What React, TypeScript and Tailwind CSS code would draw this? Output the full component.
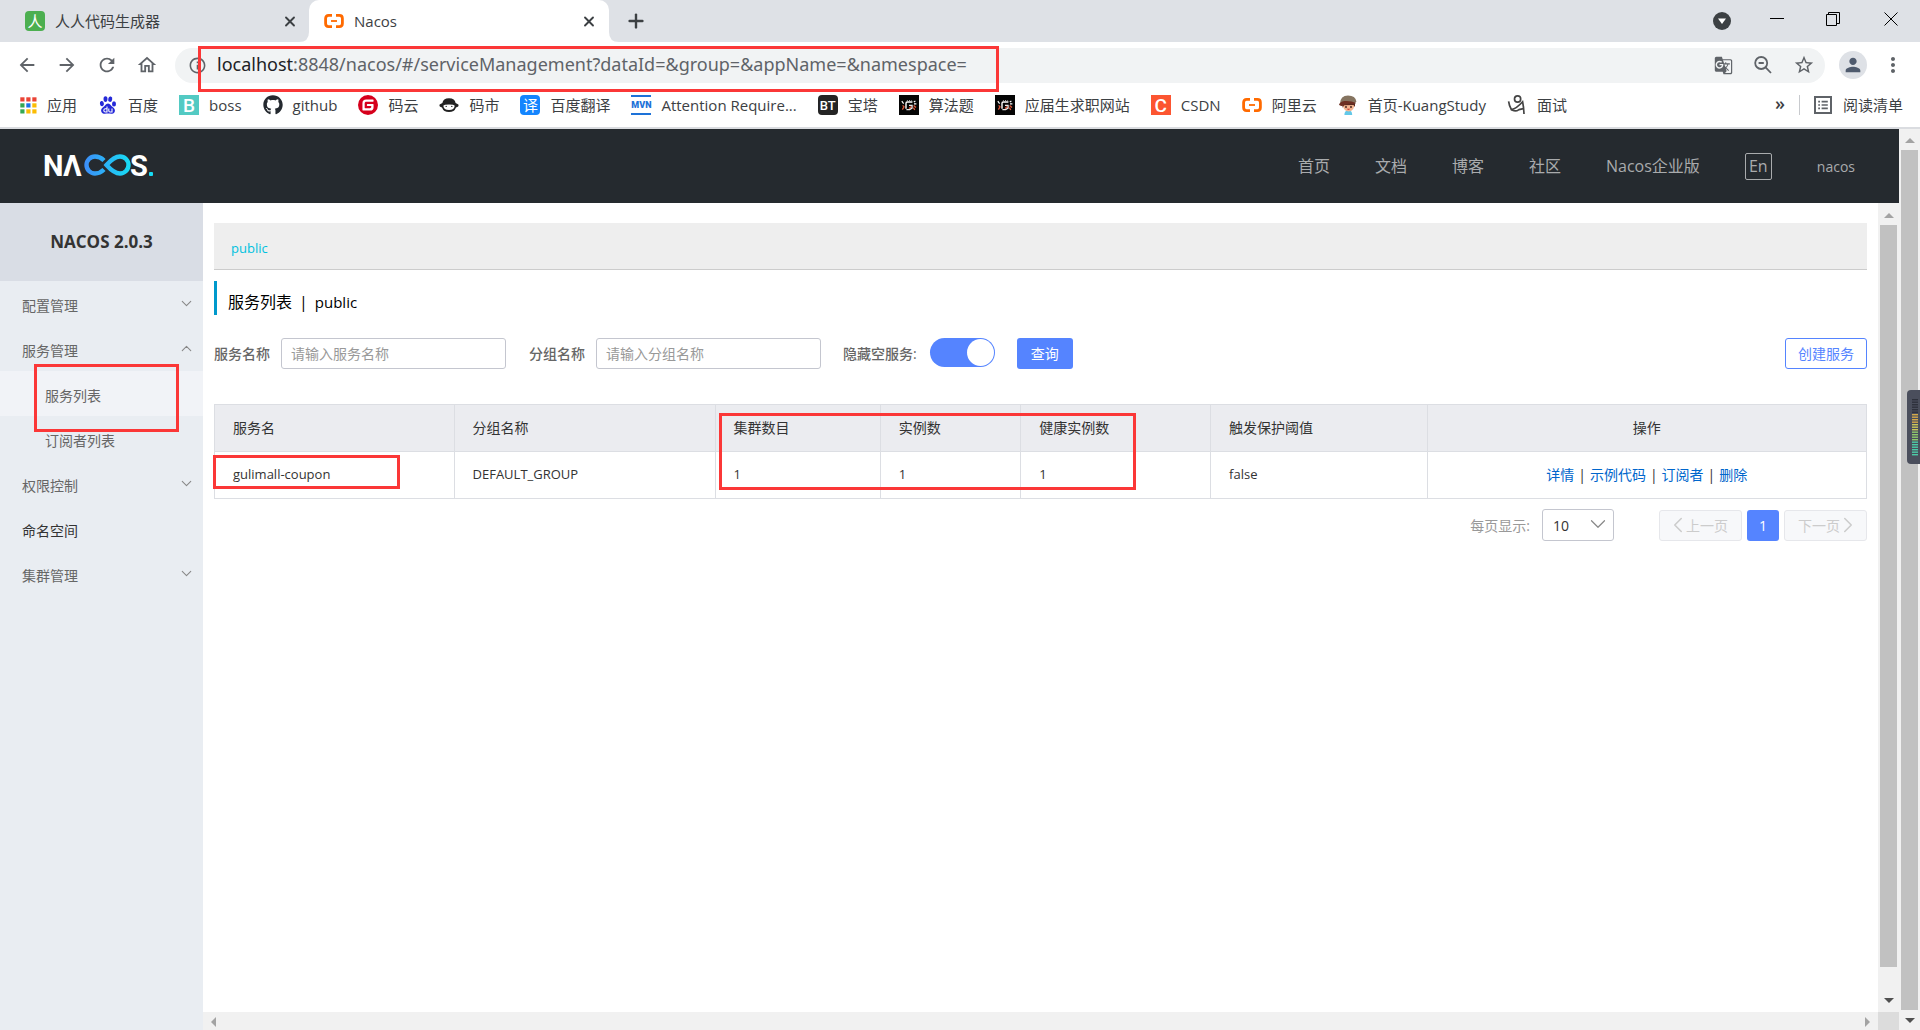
import type { ReactNode } from 'react';
import { MdArrowBack, MdArrowForward, MdRefresh, MdOutlineHome, MdStarBorder, MdPerson, MdMoreVert, MdGTranslate, MdOutlineInfo } from 'react-icons/md';
import { SiGitee } from 'react-icons/si';
import { FaGithub } from 'react-icons/fa';
import { ChevronDown, ChevronLeft, ChevronRight, ChevronUp, X, Plus } from 'lucide-react';

function AliIcon() {
  return (
    <svg viewBox="0 0 20 20" className="size-5 shrink-0" fill="none" stroke="#ff6a00" strokeWidth="2.8">
      <path d="M8 4.4H4.6Q1.6 4.4 1.6 7.4V12.6Q1.6 15.6 4.6 15.6H8" />
      <path d="M12 4.4H15.4Q18.4 4.4 18.4 7.4V12.6Q18.4 15.6 15.4 15.6H12" />
      <path d="M7 10H13" strokeWidth="1.8" />
    </svg>
  );
}

function AppsIcon() {
  const colors = ['#ea4335', '#ea4335', '#ea4335', '#34a853', '#1a73e8', '#fbbc04', '#34a853', '#fbbc04', '#fbbc04'];
  return (
    <svg viewBox="0 0 17 17" className="size-[17px] shrink-0">
      {colors.map((c, i) => (
        <rect key={i} x={(i % 3) * 6 + 0.3} y={Math.floor(i / 3) * 6 + 0.3} width="4.2" height="4.2" fill={c} />
      ))}
    </svg>
  );
}

function BaiduIcon() {
  return (
    <svg viewBox="0 0 20 20" className="size-5 shrink-0" fill="#2529d8">
      <ellipse cx="3.9" cy="8.6" rx="2" ry="2.7" transform="rotate(-12 3.9 8.6)" />
      <ellipse cx="7.5" cy="4.1" rx="2" ry="2.8" />
      <ellipse cx="12.2" cy="4.2" rx="2" ry="2.7" transform="rotate(14 12.2 4.2)" />
      <ellipse cx="16" cy="8.9" rx="2" ry="2.6" />
      <path d="M10 8.4C7.6 8.4 7 10.8 5 12.3 2.9 13.9 2.7 15.8 3.6 17.3 5 19.5 7.6 18.6 10 18.6 12.4 18.6 15.2 19.5 16.5 17.3 17.4 15.6 17 13.7 15 12.3 13 10.8 12.4 8.4 10 8.4Z" />
      <g fill="none" stroke="#fff" strokeWidth="1.1">
        <path d="M9 11.6V17H7.4Q5.8 17 5.8 15.4 5.8 13.8 7.4 13.8H9" />
        <path d="M10.8 13.4V15.8Q10.8 17 12 17H14V13.4" />
      </g>
    </svg>
  );
}

function CodingIcon() {
  return (
    <svg viewBox="0 0 20 20" className="size-5 shrink-0">
      <path d="M3.4 8Q4 3.2 10 3.2 16 3.2 16.6 8L19.4 9.4Q20 11 18.8 11.8L17 12.4Q15.4 17 10 17 4.6 17 3 12.4L1.2 11.8Q0 11 .6 9.4Z" fill="#222" />
      <path d="M4.300 10.8Q5 9.4 10 9.4 15 9.4 15.700 10.8 15.400 15 10 15 4.600 15 4.300 10.800Z" fill="#fff" />
      <circle cx="7.200" cy="11.4" r=".7" fill="#222" />
      <circle cx="12.800" cy="11.4" r=".7" fill="#222" />
    </svg>
  );
}

function AlgoIcon() {
  return (
    <svg viewBox="0 0 20 20" className="size-5 shrink-0" fill="none" strokeWidth="1.4">
      <rect width="20" height="20" fill="#050505" />
      <path d="M7 13.8V8.2Q7 7 8.2 7H13.4" stroke="#fff" />
      <path d="M10 10.4H13V13.2L10.6 14.6H7.4" stroke="#e8e8e8" />
      <path d="M8.4 6.6V5.2M10.6 6.6V5M12.6 6.6V5.4" stroke="#bbb" strokeWidth="1" />
      <path d="M3.600 10.4 5 11.800 3.400 14.600M10 13.600 12.400 11.600M14.600 10.400 17 12.600M14.4 12.600 15.8 15" stroke="#e0583a" strokeWidth="1.3" />
      <path d="M2.8 6.2 4.6 8.6M14.8 7 16.400 6M15 8.800H17.400" stroke="#fff" strokeWidth="1.2" />
    </svg>
  );
}

function BoyIcon() {
  return (
    <svg viewBox="0 0 20 20" className="size-5 shrink-0">
      <path d="M6.400 20Q6.400 15.6 10.4 15.6 14.200 15.6 14.200 20Z" fill="#63c8e8" />
      <path d="M4.6 8H16.4Q17 15.8 10.6 16.4 4.4 15.8 4.6 8Z" fill="#f3b48f" />
      <path d="M4.2 7H17V12L15.4 10 6 10.2 4.6 12.8Z" fill="#5a2a20" />
      <path d="M2 8.4Q2.4 .6 10 .4 17.6.4 18.4 6.8L16.4 8.6Q10 5.8 4.4 9.4Z" fill="#857460" />
      <path d="M1 9.8Q1.6 7 6.4 6 13 5.400 18 8 17 9.600 13 8.800 9 8.200 5 10.8 2 11.4 1 9.8Z" fill="#6e2f22" />
      <circle cx="8" cy="12" r=".9" fill="#3b1d18" />
      <circle cx="13" cy="12" r=".9" fill="#3b1d18" />
      <path d="M8.6 13.8H12.4Q10.4 16 8.6 13.8Z" fill="#c73b34" />
    </svg>
  );
}

function FigureIcon() {
  return (
    <svg viewBox="0 0 20 20" className="size-5 shrink-0" fill="none" stroke="#444" strokeWidth="1.7">
      <circle cx="10.6" cy="4" r="3.1" />
      <path d="M1.600 6.400Q2.200 11 4.400 14.600 9.400 13.800 15.600 6.800 16.800 12.400 17 19" />
      <path d="M4 14.4Q8 17.400 12 14.600L16.400 13.600" />
    </svg>
  );
}

function TextIcon({ className, children }: { className: string; children: ReactNode }) {
  return (
    <span aria-hidden="true" className={`flex size-5 shrink-0 items-center justify-center leading-none ${className}`}>
      {children}
    </span>
  );
}

function Bookmark({ icon, label }: { icon: ReactNode; label: string }) {
  return (
    <a href="#" className="flex shrink-0 items-center gap-[10px]">
      {icon}
      <span>{label}</span>
    </a>
  );
}

function RedFrame({ className }: { className: string }) {
  return <div className={`pointer-events-none absolute z-10 border-3 border-[#fb3737] ${className}`} />;
}

function Arrow({ dir, color }: { dir: 'up' | 'down' | 'left' | 'right'; color: string }) {
  const d = { up: 'M0 5 5 0 10 5Z', down: 'M0 0H10L5 5Z', left: 'M5 0V10L0 5Z', right: 'M0 0V10L5 5Z' }[dir];
  const vertical = dir === 'up' || dir === 'down';
  return (
    <svg viewBox={vertical ? '0 0 10 5' : '0 0 5 10'} className={vertical ? 'h-[5px] w-[10px] shrink-0' : 'h-[10px] w-[5px] shrink-0'} fill={color}>
      <path d={d} />
    </svg>
  );
}

function BrowserChrome() {
  return (
    <div className="shrink-0 border-b-2 border-[#dadce0] bg-white text-[15px] text-[#3c4043]">
      <div className="flex h-[42px] items-stretch bg-[#dee1e6]">
        <div className="flex w-[309px] items-center pr-[11px] pl-[25px]">
          <TextIcon className="rounded-sm bg-[#4caf50] text-[15px] text-white">人</TextIcon>
          <span className="ml-[10px] flex-1">人人代码生成器</span>
          <button aria-label="关闭标签页" className="flex size-4 items-center justify-center"><X size={17} strokeWidth={2.8} /></button>
        </div>
        <div className="relative flex w-[300px] items-center rounded-t-[10px] bg-white pr-3 pl-[15px]">
          <svg viewBox="0 0 10 10" className="absolute bottom-0 -left-[10px] size-[10px]" fill="#fff"><path d="M10 0V10H0Q10 10 10 0Z" /></svg>
          <svg viewBox="0 0 10 10" className="absolute -right-[10px] bottom-0 size-[10px]" fill="#fff"><path d="M0 0V10H10Q0 10 0 0Z" /></svg>
          <AliIcon />
          <span className="ml-[10px] flex-1">Nacos</span>
          <button aria-label="关闭标签页" className="flex size-4 items-center justify-center"><X size={17} strokeWidth={2.8} /></button>
        </div>
        <button aria-label="新标签页" className="ml-4 flex items-center"><Plus size={22} strokeWidth={2.6} /></button>
        <div className="ml-auto flex items-center text-black">
          <button aria-label="搜索标签页" className="mr-[39px]">
            <svg viewBox="0 0 18 18" className="size-[18px]"><circle cx="9" cy="9" r="9" fill="#3c4043" /><path d="M5 6.5H13L9 12Z" fill="#fff" /></svg>
          </button>
          <button aria-label="最小化" className="mr-[42px] mb-1">
            <svg viewBox="0 0 14 14" className="size-[14px]" stroke="currentColor"><path d="M0 6.5H14" /></svg>
          </button>
          <button aria-label="还原" className="mr-[44px] mb-1">
            <svg viewBox="0 0 14 14" className="size-[14px]" fill="none" stroke="currentColor"><path d="M.5 2.5H10.5V13.5H.5ZM2.5 2.5V.5H13.5V11.5H10.5" /></svg>
          </button>
          <button aria-label="关闭" className="mr-[22px] mb-1">
            <svg viewBox="0 0 14 14" className="size-[14px]" stroke="currentColor"><path d="M.5.5 13.5 13.5M13.5.5.5 13.5" /></svg>
          </button>
        </div>
      </div>

      <div className="flex h-[44px] items-center pt-[2px] pl-4 text-[#5f6368]">
        <div className="flex items-center gap-[18px]">
          <button aria-label="后退"><MdArrowBack size={22} /></button>
          <button aria-label="前进"><MdArrowForward size={22} /></button>
          <button aria-label="刷新"><MdRefresh size={22} /></button>
          <button aria-label="主页"><MdOutlineHome size={22} /></button>
        </div>
        <div className="relative ml-[17px] flex h-[35px] flex-1 items-center rounded-full bg-[#f1f3f4] pr-[10px] pl-[13px]">
          <MdOutlineInfo size={19} />
          <div className="ml-[10px] flex-1 pb-[2px] font-['Noto_Sans'] text-[18px]">
            <span className="text-[#202124]">localhost</span>:8848/nacos/#/serviceManagement?dataId=&amp;group=&amp;appName=&amp;namespace=
          </div>
          <div className="flex items-center gap-5">
            <button aria-label="翻译此页"><MdGTranslate size={19} /></button>
            <button aria-label="缩放">
              <svg viewBox="0 0 20 20" className="size-5" fill="none" stroke="currentColor" strokeWidth="1.8">
                <circle cx="8.2" cy="8" r="6" /><path d="M5.6 8H10.8M12.6 12.4 18 18" />
              </svg>
            </button>
            <button aria-label="为此标签页添加书签"><MdStarBorder size={22} /></button>
          </div>
          <RedFrame className="-top-[2px] left-[23px] h-[46px] w-[801px]" />
        </div>
        <button aria-label="个人资料" className="ml-[14px] flex size-7 items-center justify-center rounded-full bg-[#dee1e6] text-[#4f5b6e]"><MdPerson size={22} /></button>
        <button aria-label="菜单" className="mr-[15px] ml-[14px]"><MdMoreVert size={24} /></button>
      </div>

      <nav aria-label="书签栏" className="flex h-[41px] items-center pb-[3px] pl-5">
        <div className="flex items-center gap-[21px]">
          <Bookmark icon={<AppsIcon />} label="应用" />
          <Bookmark icon={<BaiduIcon />} label="百度" />
          <Bookmark icon={<TextIcon className="bg-[#53cac3] font-['Roboto'] text-[19px] font-medium text-white">B</TextIcon>} label="boss" />
          <Bookmark icon={<FaGithub size={20} color="#24292f" />} label="github" />
          <Bookmark icon={<SiGitee size={20} color="#d6001c" />} label="码云" />
          <Bookmark icon={<CodingIcon />} label="码市" />
          <Bookmark icon={<TextIcon className="rounded-sm bg-[#1485fe] text-[15px] text-white">译</TextIcon>} label="百度翻译" />
          <Bookmark icon={<TextIcon className="border-y-2 border-[#1d72d8] font-['Roboto'] text-[9px] font-black text-[#1d72d8]">MVN</TextIcon>} label="Attention Require..." />
          <Bookmark icon={<TextIcon className="rounded-sm bg-[#242424] font-['Roboto'] text-[13px] font-medium text-white">BT</TextIcon>} label="宝塔" />
          <Bookmark icon={<AlgoIcon />} label="算法题" />
          <Bookmark icon={<AlgoIcon />} label="应届生求职网站" />
          <Bookmark icon={<TextIcon className="bg-[#fc5531] font-['Roboto'] text-[19px] font-medium text-white">C</TextIcon>} label="CSDN" />
          <Bookmark icon={<AliIcon />} label="阿里云" />
          <Bookmark icon={<BoyIcon />} label="首页-KuangStudy" />
          <Bookmark icon={<FigureIcon />} label="面试" />
        </div>
        <div className="ml-auto flex items-center">
          <button aria-label="更多书签" className="mb-1 text-[18px] leading-none font-semibold">»</button>
          <span className="mr-[14px] ml-[14px] h-5 w-px bg-[#c8cace]" />
          <button className="mr-[17px] flex items-center gap-[11px]">
            <svg viewBox="0 0 18 18" className="size-[18px]" fill="none" stroke="#5f6368" strokeWidth="2">
              <rect x="1" y="1" width="16" height="16" />
              <path d="M4.2 5.6H6M4.2 9H6M4.2 12.4H6M7.6 5.6H13.8M7.6 9H13.8M7.6 12.4H13.8" strokeWidth="1.6" />
            </svg>
            阅读清单
          </button>
        </div>
      </nav>
    </div>
  );
}

function Logo() {
  return (
    <a href="#" aria-label="NACOS">
      <svg viewBox="-6 -9 122 42" className="h-[42px] w-[122px]" fontFamily="Roboto" fontWeight="700" fontSize="29" fill="#fff">
        <defs>
          <linearGradient id="loop" gradientUnits="userSpaceOnUse" x1="40" y1="0" x2="86" y2="0">
            <stop offset="0" stopColor="#3d8df8" />
            <stop offset="1" stopColor="#17dcf4" />
          </linearGradient>
        </defs>
        <text x="-1" y="21.5">N</text>
        <text x="19" y="21.5">Λ</text>
        <path d="M60 6.5Q56 2.500 51 2.5A8.5 8.5 0 0 0 51 19.5Q56 19.500 60 15.5M62.500 11Q70 2.5 76 2.5A8.5 8.5 0 0 1 76 19.5Q70 19.5 62.500 11Z" fill="none" stroke="url(#loop)" strokeWidth="4.4" />
        <text x="86" y="21.5">S</text>
        <rect x="105" y="18" width="4" height="4" rx="1" fill="#17dcf4" />
      </svg>
    </a>
  );
}

function TopBar() {
  return (
    <header className="flex h-[74px] shrink-0 items-center bg-[#252a2f] pr-11 pl-[38px] text-[16px] text-[#a9abad]">
      <Logo />
      <nav className="ml-auto flex items-center gap-[45px]">
        <a href="#">首页</a>
        <a href="#">文档</a>
        <a href="#">博客</a>
        <a href="#">社区</a>
        <a href="#">Nacos企业版</a>
        <button className="flex size-[27px] items-center justify-center rounded-xs border border-[#a9abad]">En</button>
        <a href="#" className="text-[14px]">nacos</a>
      </nav>
    </header>
  );
}

function MenuItem({ label, open, leaf }: { label: string; open?: boolean; leaf?: boolean }) {
  return (
    <a href="#" className={`flex h-[45px] items-center justify-between pt-1 pr-2 pl-[22px] ${leaf ? 'text-[#333]' : 'text-[#666]'}`}>
      {label}
      {!leaf && <span className="mb-1 text-[#888]">{open ? <ChevronUp size={17} strokeWidth={1.5} /> : <ChevronDown size={17} strokeWidth={1.5} />}</span>}
    </a>
  );
}

function Sidebar() {
  return (
    <aside className="w-[203px] shrink-0 bg-[#e9edf2] text-[14px]">
      <h1 className="flex h-[78px] items-center justify-center bg-[#d9dde5] text-[17px] font-bold text-[#333]">NACOS 2.0.3</h1>
      <nav>
        <MenuItem label="配置管理" />
        <MenuItem label="服务管理" open />
        <div className="relative text-[#666]">
          <a href="#" className="flex h-[45px] items-center bg-[#f1f3f7] pt-1 pl-[45px]">服务列表</a>
          <a href="#" className="flex h-[45px] items-center pt-1 pl-[45px]">订阅者列表</a>
          <RedFrame className="-top-[7px] left-[34px] h-[68px] w-[145px]" />
        </div>
        <MenuItem label="权限控制" />
        <MenuItem label="命名空间" leaf />
        <MenuItem label="集群管理" />
      </nav>
    </aside>
  );
}

function SearchForm() {
  const field = 'h-[31px] w-[225px] rounded-[3px] border border-[#c4c6cf] px-[9px] text-[14px] outline-none placeholder:text-[#999]';
  return (
    <form className="mt-[23px] flex items-center text-[14px] text-[#666]">
      <label htmlFor="service" className="mr-[11px] font-medium">服务名称</label>
      <input id="service" placeholder="请输入服务名称" className={field} />
      <label htmlFor="group" className="mr-[11px] ml-[23px] font-medium">分组名称</label>
      <input id="group" placeholder="请输入分组名称" className={field} />
      <label className="ml-[22px] flex cursor-pointer items-center font-medium">
        隐藏空服务:
        <input type="checkbox" role="switch" defaultChecked className="peer sr-only" />
        <span className="mb-[2px] ml-[13px] flex h-[29px] w-[65px] items-center justify-end rounded-full bg-[#5584ff] px-px">
          <span className="size-[27px] rounded-full bg-white" />
        </span>
      </label>
      <button type="button" className="ml-[22px] h-[31px] rounded-[3px] bg-[#5584ff] px-[14px] text-white">查询</button>
      <button type="button" className="ml-auto h-[31px] rounded-[3px] border border-[#5584ff] px-[12px] text-[#5584ff]">创建服务</button>
    </form>
  );
}

function ServiceTable() {
  const cell = 'h-[47px] border border-[#dcdee3] pl-[18px] text-left font-normal';
  return (
    <div className="mt-[35px]">
      <table className="w-full table-fixed border-collapse text-[13px] text-[#333]">
        <colgroup>
          <col className="w-[14.5%]" />
          <col className="w-[15.8%]" />
          <col className="w-[10%]" />
          <col className="w-[8.5%]" />
          <col className="w-[11.5%]" />
          <col className="w-[13.1%]" />
          <col />
        </colgroup>
        <thead>
          <tr className="bg-[#ebecf0] text-[14px]">
            <th className={`pb-[2px] ${cell}`}>服务名</th>
            <th className={`pb-[2px] ${cell}`}>分组名称</th>
            <th className={`relative pb-[2px] ${cell}`}>
              集群数目
              <RedFrame className="top-[8px] left-[3px] h-[77px] w-[417px]" />
            </th>
            <th className={`pb-[2px] ${cell}`}>实例数</th>
            <th className={`pb-[2px] ${cell}`}>健康实例数</th>
            <th className={`pb-[2px] ${cell}`}>触发保护阈值</th>
            <th className="border border-[#dcdee3] pb-[2px] text-center font-normal">操作</th>
          </tr>
        </thead>
        <tbody>
          <tr>
            <td className={`relative ${cell}`}>
              gulimall-coupon
              <RedFrame className="top-[3px] -left-[2px] h-[34px] w-[187px]" />
            </td>
            <td className={cell}>DEFAULT_GROUP</td>
            <td className={cell}>1</td>
            <td className={cell}>1</td>
            <td className={cell}>1</td>
            <td className={cell}>false</td>
            <td className="border border-[#dcdee3] pb-[2px] text-center text-[14px]">
              <a href="#" className="text-[#06c]">详情</a>
              <span className="mx-1">|</span>
              <a href="#" className="text-[#06c]">示例代码</a>
              <span className="mx-1">|</span>
              <a href="#" className="text-[#06c]">订阅者</a>
              <span className="mx-1">|</span>
              <a href="#" className="text-[#06c]">删除</a>
            </td>
          </tr>
        </tbody>
      </table>
    </div>
  );
}

function Pager() {
  const step = 'flex h-[31px] w-[83px] items-center justify-center gap-[3px] rounded-[3px] border border-[#e6e7eb] bg-[#f7f8fa] text-[#ccc]';
  return (
    <div className="mt-[10px] flex items-center justify-end text-[14px]">
      <label htmlFor="size" className="mr-3 text-[#999]">每页显示:</label>
      <div className="relative mr-[45px]">
        <select id="size" defaultValue="10" className="block h-8 w-[72px] appearance-none rounded-[3px] border border-[#c4c6cf] bg-white pl-[10px] text-[#333]">
          <option>10</option>
          <option>20</option>
          <option>50</option>
        </select>
        <ChevronDown size={26} strokeWidth={1.1} className="pointer-events-none absolute top-[2px] right-[3px] text-[#888]" />
      </div>
      <button disabled className={step}><ChevronLeft size={26} strokeWidth={1.4} className="-mx-[8px] shrink-0" />上一页</button>
      <button className="mx-[5px] h-[31px] w-8 rounded-[3px] bg-[#5584ff] text-white">1</button>
      <button disabled className={step}>下一页<ChevronRight size={26} strokeWidth={1.4} className="-mx-[8px] shrink-0" /></button>
    </div>
  );
}

export default function App() {
  return (
    <div className="flex h-screen flex-col overflow-hidden bg-white font-['Open_Sans','Noto_Sans_CJK_SC',sans-serif]">
      <BrowserChrome />
      <div className="relative flex min-h-0 flex-1">
        <div className="flex min-w-0 flex-1 flex-col">
          <TopBar />
          <div className="flex min-h-0 flex-1">
            <Sidebar />
            <div className="flex min-w-0 flex-1 flex-col">
              <div className="flex min-h-0 flex-1">
                <main className="min-w-0 flex-1 pt-5 pr-[11px] pl-[11px]">
                  <div className="flex h-[47px] items-center border-b border-[#ccc] bg-[#eee] pt-[6px] pl-[17px] text-[13px]">
                    <a href="#" className="text-[#00c1de]">public</a>
                  </div>
                  <h2 className="mt-[11px] flex h-[34px] items-center border-l-3 border-[#09c] pt-2 pl-[11px] text-[16px] text-black">
                    服务列表<span className="mx-[7px]">|</span><span className="text-[15px]">public</span>
                  </h2>
                  <SearchForm />
                  <ServiceTable />
                  <Pager />
                </main>
                <div className="flex w-[21px] shrink-0 flex-col items-center bg-[#f1f1f1] pt-[10px] pb-[9px]">
                  <Arrow dir="up" color="#a3a3a3" />
                  <div className="mt-[7px] mb-[31px] w-[17px] flex-1 bg-[#c1c1c1]" />
                  <Arrow dir="down" color="#505050" />
                </div>
              </div>
              <div className="flex h-[18px] shrink-0 bg-[#f1f1f1]">
                <div className="flex flex-1 items-center justify-between px-2 pt-[2px]">
                  <Arrow dir="left" color="#a3a3a3" />
                  <Arrow dir="right" color="#a3a3a3" />
                </div>
                <div className="w-[21px] bg-[#dcdcdc]" />
              </div>
            </div>
          </div>
        </div>
        <div className="flex w-[21px] shrink-0 flex-col items-center bg-[#f1f1f1] pt-[9px] pb-[7px]">
          <Arrow dir="up" color="#a3a3a3" />
          <div className="mt-[7px] mb-[8px] w-[17px] flex-1 bg-[#c1c1c1]" />
          <Arrow dir="down" color="#505050" />
        </div>
        <svg viewBox="0 0 13 74" className="absolute top-[261px] right-0 z-20 h-[74px] w-[13px]">
          <path d="M13 0H4Q0 0 0 4V70Q0 74 4 74H13Z" fill="#4a4e5c" />
          {Array.from({ length: 23 }, (_, i) => (
            <rect
              key={i}
              x="5"
              y={9 + i * 2.5}
              width="6"
              height="1.4"
              fill={i < 6 ? '#2e313c' : i < 10 ? '#d3a94a' : i < 13 ? '#c9c85a' : i < 17 ? '#8fca6c' : '#4ccba6'}
            />
          ))}
        </svg>
      </div>
    </div>
  );
}
